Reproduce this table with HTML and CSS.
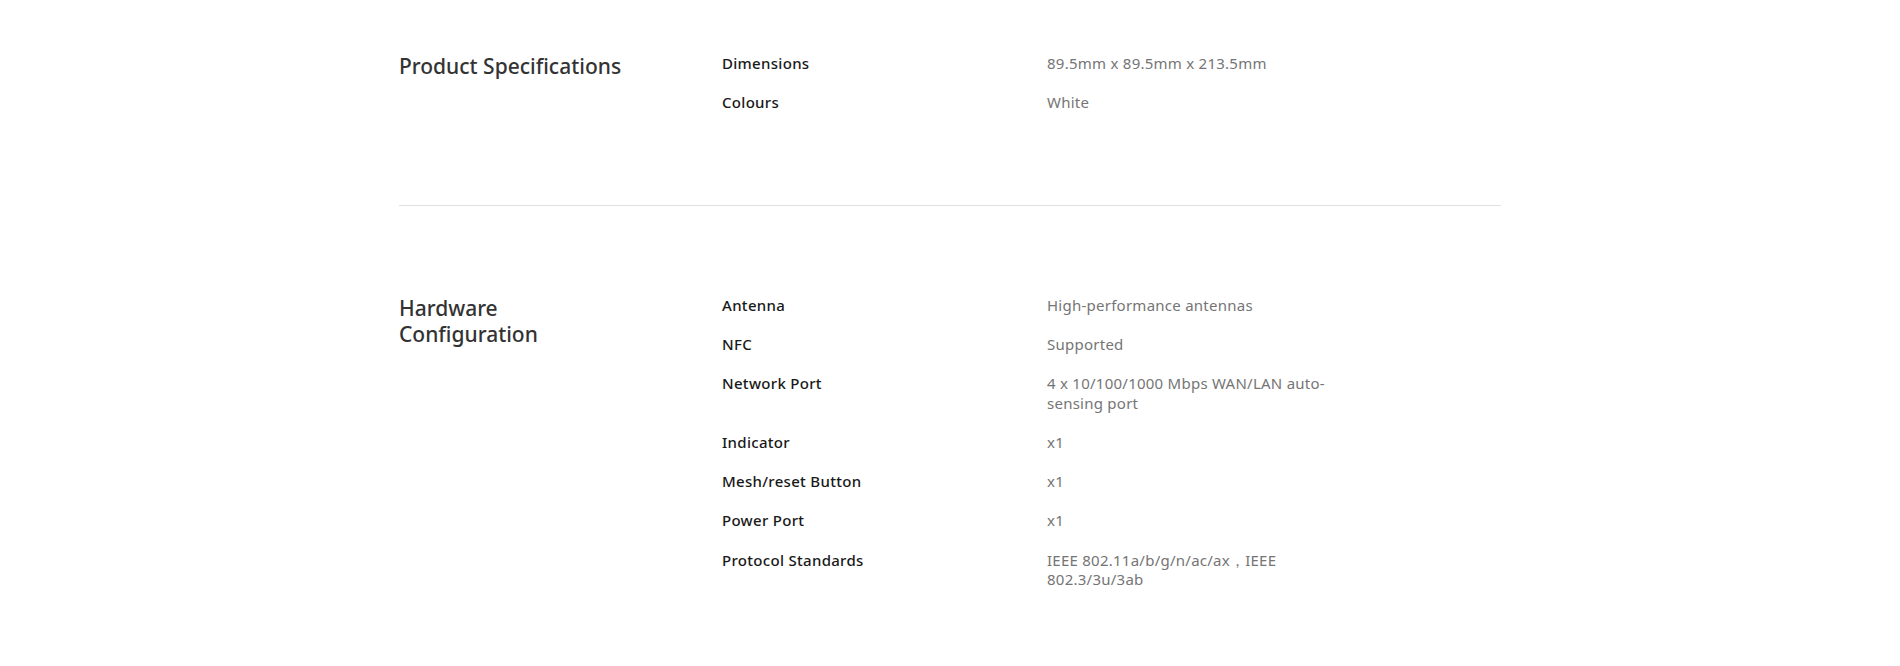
FILE: index.html
```html
<!DOCTYPE html>
<html lang="en">
<head>
<meta charset="utf-8">
<title>Specifications</title>
<link rel="stylesheet" href="styles.css">
</head>
<body>
<main class="specs">
  <section class="spec-section spec-section--first">
    <h2 class="spec-title">Product Specifications</h2>
    <dl class="spec-list">
      <div class="spec-row"><dt class="spec-label">Dimensions</dt><dd class="spec-value">89.5mm x 89.5mm x 213.5mm</dd></div>
      <div class="spec-row"><dt class="spec-label">Colours</dt><dd class="spec-value">White</dd></div>
    </dl>
  </section>
  <section class="spec-section">
    <h2 class="spec-title">Hardware Configuration</h2>
    <dl class="spec-list">
      <div class="spec-row"><dt class="spec-label">Antenna</dt><dd class="spec-value">High-performance antennas</dd></div>
      <div class="spec-row"><dt class="spec-label">NFC</dt><dd class="spec-value">Supported</dd></div>
      <div class="spec-row"><dt class="spec-label">Network Port</dt><dd class="spec-value">4 x 10/100/1000 Mbps WAN/LAN auto-sensing port</dd></div>
      <div class="spec-row"><dt class="spec-label">Indicator</dt><dd class="spec-value">x1</dd></div>
      <div class="spec-row"><dt class="spec-label">Mesh/reset Button</dt><dd class="spec-value">x1</dd></div>
      <div class="spec-row"><dt class="spec-label">Power Port</dt><dd class="spec-value">x1</dd></div>
      <div class="spec-row"><dt class="spec-label">Protocol Standards</dt><dd class="spec-value">IEEE 802.11a/b/g/n/ac/ax，IEEE 802.3/3u/3ab</dd></div>
    </dl>
  </section>
</main>
</body>
</html>
```
FILE: styles.css
```css
* { box-sizing: border-box; }

html, body {
  margin: 0;
  padding: 0;
  background: #ffffff;
}

body {
  font-family: "Noto Sans", "Open Sans", "Liberation Sans", sans-serif;
  color: #191919;
}

.specs {
  width: 1102px;
  margin: 0 auto;
}

.spec-section {
  display: grid;
  grid-template-columns: 323px 1fr;
  align-items: start;
  padding: 90px 0;
}

.spec-section--first {
  padding-top: 54px;
  padding-bottom: 92px;
  border-bottom: 1px solid #e0e0e0;
}

.spec-title {
  margin: -1px 0 0;
  max-width: 228px;
  font-size: 21px;
  line-height: 26.5px;
  font-weight: 500;
  color: #333333;
}

.spec-list {
  margin: 0;
  display: flex;
  flex-direction: column;
  gap: 19.6px;
}

.spec-row {
  display: grid;
  grid-template-columns: 325px 300px;
}

.spec-label {
  font-size: 15px;
  line-height: 19.6px;
  font-weight: 500;
  letter-spacing: 0.3px;
  color: #191919;
}

.spec-value {
  margin: 0;
  font-size: 15px;
  line-height: 19.6px;
  font-weight: 400;
  letter-spacing: 0.25px;
  color: #757575;
}
```
